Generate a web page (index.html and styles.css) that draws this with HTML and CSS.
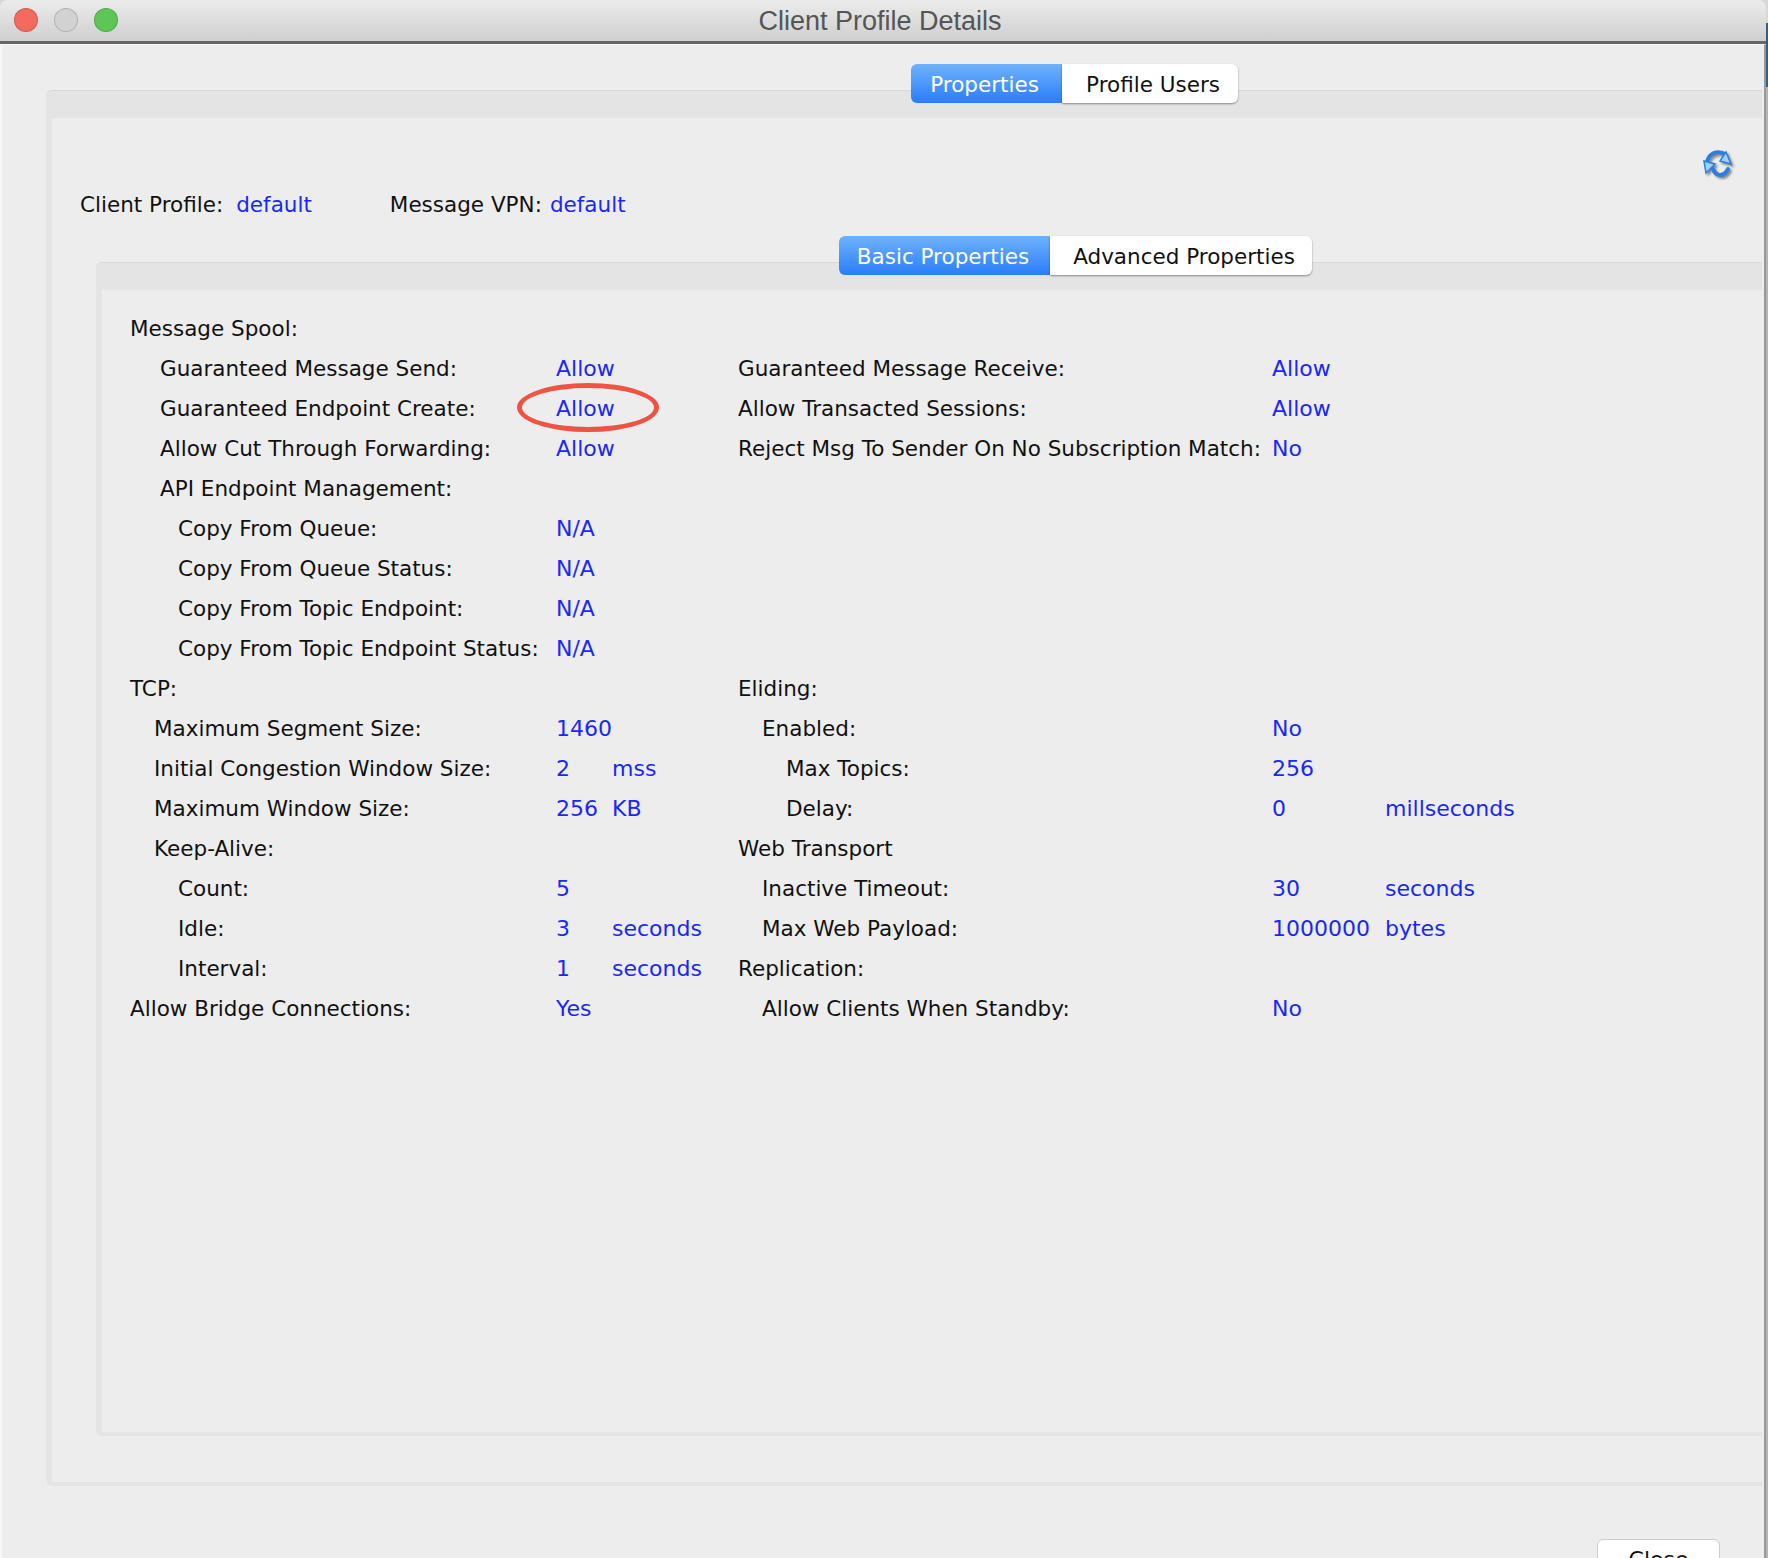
FILE: index.html
```html
<!DOCTYPE html>
<html lang="en">
<head>
    <meta charset="UTF-8">
    <title>Client Profile Details</title>
    <link rel="stylesheet" href="styles.css">
</head>
<body>
    <div class="window">
        <div class="titlebar">
            <div class="lights">
                <span class="light red"></span>
                <span class="light gray"></span>
                <span class="light green"></span>
            </div>
            <div class="title">Client Profile Details</div>
        </div>

        <div class="content">
            <div class="outer-tabs">
                <div class="tabs">
                    <div class="tab active w-props">Properties</div>
                    <div class="tab last w-users">Profile Users</div>
                </div>
            </div>
            <div class="panel outer">
                <div class="refresh-row">
                    <svg class="refresh" width="32" height="32" viewBox="0 0 32 32">
                        <g fill="none" stroke="#2b7fe0" stroke-width="4" stroke-linecap="round">
                            <path d="M5 13 C7 4 15 1 23 5"/>
                            <path d="M26 20 C22 28 14 28 11 20"/>
                        </g>
                        <path d="M24 3 L18 12 L29 15 Z" fill="#9fd0fa" stroke="#2b7fe0" stroke-width="1.5"/>
                        <path d="M2 12 L13 15 L4 24 Z" fill="#9fd0fa" stroke="#2b7fe0" stroke-width="1.5"/>
                    </svg>
                </div>
                <div class="info-line">
                    <span class="lbl">Client Profile:</span><span class="val gap-a">default</span>
                    <span class="lbl gap-b">Message VPN:</span><span class="val gap-c">default</span>
                </div>
                <div class="inner-tabs">
                    <div class="tabs">
                        <div class="tab active w-basic">Basic Properties</div>
                        <div class="tab last w-adv">Advanced Properties</div>
                    </div>
                </div>
                <div class="panel inner">
                    <div class="props">
                        <div class="row"><div class="lbl">Message Spool:</div></div>
                        <div class="row">
                            <div class="lbl i2">Guaranteed Message Send:</div><div class="val">Allow</div><div></div>
                            <div class="lbl">Guaranteed Message Receive:</div><div class="val">Allow</div><div></div>
                        </div>
                        <div class="row">
                            <div class="lbl i2">Guaranteed Endpoint Create:</div><div class="val">Allow</div><div></div>
                            <div class="lbl">Allow Transacted Sessions:</div><div class="val">Allow</div><div></div>
                        </div>
                        <div class="row">
                            <div class="lbl i2">Allow Cut Through Forwarding:</div><div class="val">Allow</div><div></div>
                            <div class="lbl">Reject Msg To Sender On No Subscription Match:</div><div class="val">No</div><div></div>
                        </div>
                        <div class="row"><div class="lbl i2">API Endpoint Management:</div></div>
                        <div class="row"><div class="lbl i3">Copy From Queue:</div><div class="val">N/A</div></div>
                        <div class="row"><div class="lbl i3">Copy From Queue Status:</div><div class="val">N/A</div></div>
                        <div class="row"><div class="lbl i3">Copy From Topic Endpoint:</div><div class="val">N/A</div></div>
                        <div class="row"><div class="lbl i3">Copy From Topic Endpoint Status:</div><div class="val">N/A</div></div>
                        <div class="row">
                            <div class="lbl">TCP:</div><div></div><div></div>
                            <div class="lbl">Eliding:</div><div></div><div></div>
                        </div>
                        <div class="row">
                            <div class="lbl i1">Maximum Segment Size:</div><div class="val">1460</div><div></div>
                            <div class="lbl i1">Enabled:</div><div class="val">No</div><div></div>
                        </div>
                        <div class="row">
                            <div class="lbl i1">Initial Congestion Window Size:</div><div class="val">2</div><div class="val">mss</div>
                            <div class="lbl i3">Max Topics:</div><div class="val">256</div><div></div>
                        </div>
                        <div class="row">
                            <div class="lbl i1">Maximum Window Size:</div><div class="val">256</div><div class="val">KB</div>
                            <div class="lbl i3">Delay:</div><div class="val">0</div><div class="val">millseconds</div>
                        </div>
                        <div class="row">
                            <div class="lbl i1">Keep-Alive:</div><div></div><div></div>
                            <div class="lbl">Web Transport</div><div></div><div></div>
                        </div>
                        <div class="row">
                            <div class="lbl i3">Count:</div><div class="val">5</div><div></div>
                            <div class="lbl i1">Inactive Timeout:</div><div class="val">30</div><div class="val">seconds</div>
                        </div>
                        <div class="row">
                            <div class="lbl i3">Idle:</div><div class="val">3</div><div class="val">seconds</div>
                            <div class="lbl i1">Max Web Payload:</div><div class="val">1000000</div><div class="val">bytes</div>
                        </div>
                        <div class="row">
                            <div class="lbl i3">Interval:</div><div class="val">1</div><div class="val">seconds</div>
                            <div class="lbl">Replication:</div><div></div><div></div>
                        </div>
                        <div class="row">
                            <div class="lbl">Allow Bridge Connections:</div><div class="val">Yes</div><div></div>
                            <div class="lbl i1">Allow Clients When Standby:</div><div class="val">No</div><div></div>
                        </div>
                    </div>
                    <div class="ring"></div>
                </div>
            </div>
            <div class="footer">
                <div class="close-btn">Close</div>
            </div>
        </div>
    </div>
</body>
</html>
```

FILE: styles.css
```css
*{
    padding: 0px;
    margin: 0px;
    box-sizing: border-box;
}
html, body{
    height: 1558px;
    overflow: hidden;
}
body{
    /* bit of the desktop showing behind the window */
    background: linear-gradient(#d8d8d8 23px, #2f5f8f 23px, #2f5f8f 87px, #b5b5b5 87px);
    font-family: "DejaVu Sans", sans-serif;
    font-size: 22px;
    color: #111;
}
.window{
    width: 1766px;
    height: 1558px;
}
.titlebar{
    height: 44px;
    background: linear-gradient(#ececec, #cfcfcf);
    border-bottom: 3px solid #666;
    border-radius: 8px 8px 0 0;
    display: flex;
    align-items: center;
}
.lights{
    display: flex;
    gap: 16px;
    padding-left: 14px;
    margin-top: -2px;
}
.light{
    width: 24px;
    height: 24px;
    border-radius: 50%;
    border: 1px solid rgba(0,0,0,0.15);
}
.red{ background-color: #f46a5f; }
.gray{ background-color: #d2d2d2; }
.green{ background-color: #5ec657; }
.title{
    flex: 1;
    text-align: center;
    font-family: "Liberation Sans", sans-serif;
    font-size: 27px;
    color: #555;
    margin-top: 2px;
    margin-left: -124px;
}
.content{
    height: 1514px;
    background-color: #ededed;
    border-top: 1px solid #f8f8f8;
    border-left: 2px solid #f7f7f7;
    border-right: 2px solid #999;
    padding: 19px 2px 0 44px;
}
.outer-tabs{
    display: flex;
    padding-left: 865px;
    height: 39px;
    margin-bottom: -12px;
    position: relative;
    z-index: 1;
}
.tabs{
    display: flex;
    height: 39px;
}
.tab{
    height: 39px;
    background-color: #fff;
    font-size: 21.5px;
    padding-top: 2px;
    display: flex;
    align-items: center;
    justify-content: center;
}
.tab.active{
    background: linear-gradient(#6fb2fc, #2a7dfb);
    color: #fff;
    border-radius: 6px 0 0 6px;
}
.tab.last{
    border-radius: 0 6px 6px 0;
    box-shadow: 0 1px 2px rgba(0,0,0,0.4);
}
.w-props{ width: 151px; padding-right: 4px; }
.w-users{ width: 176px; padding-left: 6px; }
.w-basic{ width: 211px; padding-right: 3px; }
.w-adv{ width: 262px; padding-left: 6px; }
.panel{
    border: 6px solid #e4e4e4;
    border-top-width: 27px;
    border-bottom-width: 4px;
    border-right: 0;
    border-radius: 6px 0 0 6px;
    box-shadow: 0 -1px 0 #d8d8d8;
}
.outer{
    height: 1395px;
    padding: 30px 0 0 20px;
}
.refresh-row{
    display: flex;
    justify-content: flex-end;
    height: 43px;
    padding-right: 28px;
}
.refresh{
    margin-top: 1px;
    filter: drop-shadow(2px 2px 1px rgba(70,70,70,0.6));
}
.info-line{
    height: 26px;
    padding-left: 8px;
    display: flex;
    align-items: center;
}
.info-line .val{
    font-size: 21.5px;
}
.gap-a{ margin-left: 13px; }
.gap-b{ margin-left: 78px; }
.gap-c{ margin-left: 8px; }
.val{
    color: #1a28f5;
    white-space: nowrap;
}
.lbl{
    font-size: 21.5px;
    white-space: nowrap;
}
.inner-tabs{
    display: flex;
    padding-left: 767px;
    height: 39px;
    margin-top: 19px;
    margin-bottom: -12px;
    position: relative;
    z-index: 1;
}
.inner{
    margin-left: 24px;
    height: 1173px;
    padding: 18px 0 0 28px;
    position: relative;
}
.row{
    display: grid;
    grid-template-columns: 426px 56px 126px 534px 113px auto;
    height: 40px;
    align-items: center;
}
.i1{ padding-left: 24px; }
.i2{ padding-left: 30px; }
.i3{ padding-left: 48px; }
.ring{
    position: absolute;
    left: 415px;
    top: 93px;
    width: 142px;
    height: 49px;
    border: 5px solid #ef5344;
    border-radius: 50%;
}
.footer{
    display: flex;
    justify-content: flex-end;
    padding: 53px 42px 0 0;
}
.close-btn{
    width: 123px;
    height: 40px;
    background-color: #fff;
    border: 1px solid #ccc;
    border-radius: 6px;
    text-align: center;
    line-height: 40px;
}
```
